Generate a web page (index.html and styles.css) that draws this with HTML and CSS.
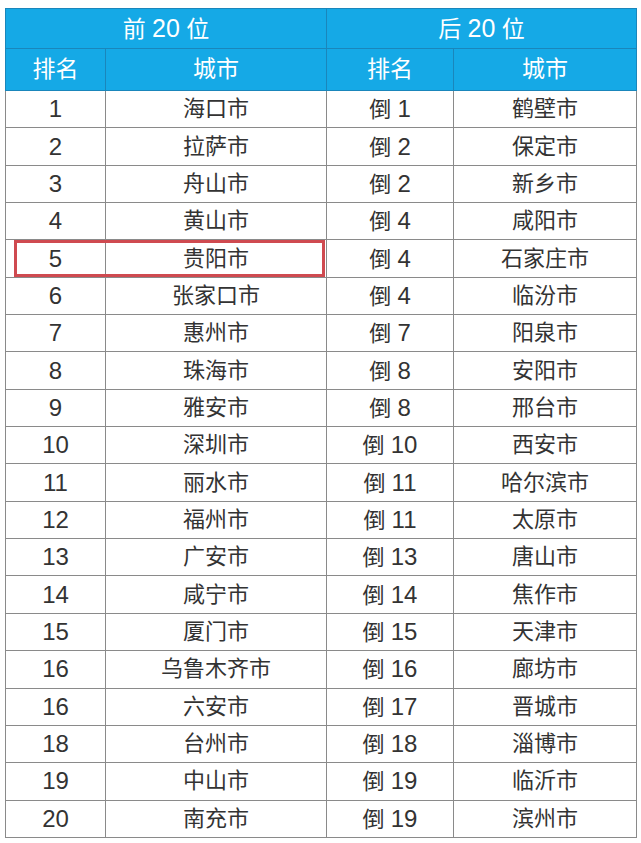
FILE: index.html
```html
<!DOCTYPE html>
<html lang="zh">
<head>
<meta charset="utf-8">
<link rel="stylesheet" href="styles.css">
</head>
<body>
<div class="wrap">
<table class="rank">
<colgroup><col class="c1"><col class="c2"><col class="c3"><col class="c4"></colgroup>
<thead>
<tr class="h1"><th colspan="2">前 <span class="n">20</span> 位</th><th colspan="2">后 <span class="n">20</span> 位</th></tr>
<tr class="h2"><th>排名</th><th>城市</th><th>排名</th><th>城市</th></tr>
</thead>
<tbody>
<tr><td class="n">1</td><td>海口市</td><td>倒 <span class="n">1</span></td><td>鹤壁市</td></tr>
<tr><td class="n">2</td><td>拉萨市</td><td>倒 <span class="n">2</span></td><td>保定市</td></tr>
<tr><td class="n">3</td><td>舟山市</td><td>倒 <span class="n">2</span></td><td>新乡市</td></tr>
<tr><td class="n">4</td><td>黄山市</td><td>倒 <span class="n">4</span></td><td>咸阳市</td></tr>
<tr><td class="n">5</td><td>贵阳市</td><td>倒 <span class="n">4</span></td><td>石家庄市</td></tr>
<tr><td class="n">6</td><td>张家口市</td><td>倒 <span class="n">4</span></td><td>临汾市</td></tr>
<tr><td class="n">7</td><td>惠州市</td><td>倒 <span class="n">7</span></td><td>阳泉市</td></tr>
<tr><td class="n">8</td><td>珠海市</td><td>倒 <span class="n">8</span></td><td>安阳市</td></tr>
<tr><td class="n">9</td><td>雅安市</td><td>倒 <span class="n">8</span></td><td>邢台市</td></tr>
<tr><td class="n">10</td><td>深圳市</td><td>倒 <span class="n">10</span></td><td>西安市</td></tr>
<tr><td class="n">11</td><td>丽水市</td><td>倒 <span class="n">11</span></td><td>哈尔滨市</td></tr>
<tr><td class="n">12</td><td>福州市</td><td>倒 <span class="n">11</span></td><td>太原市</td></tr>
<tr><td class="n">13</td><td>广安市</td><td>倒 <span class="n">13</span></td><td>唐山市</td></tr>
<tr><td class="n">14</td><td>咸宁市</td><td>倒 <span class="n">14</span></td><td>焦作市</td></tr>
<tr><td class="n">15</td><td>厦门市</td><td>倒 <span class="n">15</span></td><td>天津市</td></tr>
<tr><td class="n">16</td><td>乌鲁木齐市</td><td>倒 <span class="n">16</span></td><td>廊坊市</td></tr>
<tr><td class="n">16</td><td>六安市</td><td>倒 <span class="n">17</span></td><td>晋城市</td></tr>
<tr><td class="n">18</td><td>台州市</td><td>倒 <span class="n">18</span></td><td>淄博市</td></tr>
<tr><td class="n">19</td><td>中山市</td><td>倒 <span class="n">19</span></td><td>临沂市</td></tr>
<tr><td class="n">20</td><td>南充市</td><td>倒 <span class="n">19</span></td><td>滨州市</td></tr>
</tbody>
</table>
<div class="highlight"></div>
</div>
</body>
</html>
```
FILE: styles.css
```css
html, body {
  margin: 0;
  padding: 0;
  background: #fff;
}
.wrap {
  position: relative;
  margin: 8px 0 0 5px;
  width: 631px;
}
.rank {
  border-collapse: collapse;
  table-layout: fixed;
  width: 631px;
  font-family: "Liberation Sans", "Noto Sans CJK SC", sans-serif;
  font-size: 22px;
  color: #333;
}
.c1 { width: 100px; }
.c2 { width: 221px; }
.c3 { width: 127px; }
.c4 { width: 183px; }
.rank th {
  background: #15a9e6;
  color: #fff;
  font-weight: normal;
  padding: 0;
  border: 1px solid #1a86bb;
  line-height: 1;
}
.rank .h1 th {
  height: 39px;
  font-size: 23px;
}
.rank .h2 th {
  height: 41px;
  font-size: 23px;
}
.rank td {
  height: 36.35px;
  padding: 0;
  text-align: center;
  border: 1px solid #8a8a8a;
  line-height: 1;
}
.n {
  font-size: 24px;
}
.rank th .n {
  font-size: 25px;
}
.highlight {
  position: absolute;
  left: 9px;
  top: 232px;
  width: 311px;
  height: 37px;
  box-sizing: border-box;
  border: 3px solid #cf4a50;
}
```
